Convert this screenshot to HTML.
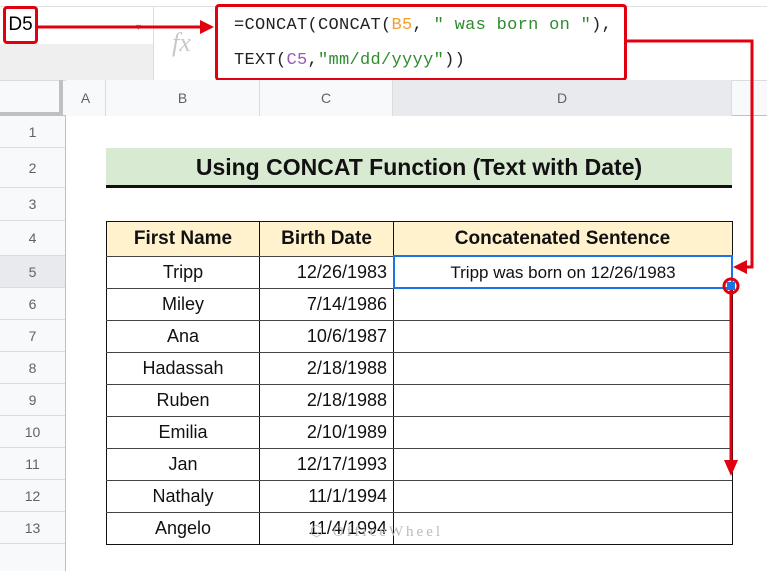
<!DOCTYPE html>
<html><head><style>
body{margin:0;width:767px;height:571px;position:relative;overflow:hidden;background:#fff;font-family:"Liberation Sans",Arial,sans-serif}
.a{position:absolute}
.rh{position:absolute;left:0;width:65px;background:#f8f9fa;border-bottom:1px solid #dadce0;color:#5f6368;font-size:14px;text-align:center;box-sizing:border-box}
.ch{position:absolute;top:80px;height:36px;line-height:36px;color:#5f6368;font-size:14px;text-align:center;border-right:1px solid #dadce0;box-sizing:border-box;background:#f8f9fa}
.c{position:absolute;box-sizing:border-box;font-size:18px;color:#111}
.mono{font-family:"Liberation Mono",monospace;font-size:17px;letter-spacing:0.3px}
</style></head><body>
<div class="a" style="left:0;top:6px;width:767px;height:1px;background:#e0e0e0"></div>
<div class="a" style="left:0;top:44px;width:153px;height:36px;background:#efefef"></div>
<div class="a" style="left:153px;top:7px;width:1px;height:73px;background:#dadce0"></div>
<div class="a" style="left:134px;top:22px;color:#999;font-size:9px">▼</div>
<div class="a" style="left:172px;top:28px;font-family:'Liberation Serif',serif;font-style:italic;font-size:26px;color:#c8c8c8">fx</div>
<div class="a" style="left:3px;top:6px;width:35px;height:38px;border:3px solid #e0000f;border-radius:4px;box-sizing:border-box;font-size:19px;line-height:32px;text-align:center;color:#000">D5</div>
<div class="a" style="left:215px;top:4px;width:412px;height:77px;border:3px solid #e0000f;border-radius:4px;box-sizing:border-box;background:#fff"></div>
<div class="a mono" style="left:234px;top:16px;color:#222">=CONCAT(CONCAT(<span style="color:#f0a030">B5</span>, <span style="color:#2e8b2e">" was born on "</span>),</div>
<div class="a mono" style="left:234px;top:51px;color:#222">TEXT(<span style="color:#9b59b6">C5</span>,<span style="color:#2e8b2e">"mm/dd/yyyy"</span>))</div>
<div class="a" style="left:0;top:80px;width:767px;height:36px;background:#f8f9fa;border-top:1px solid #dadce0;border-bottom:1px solid #c0c0c0;box-sizing:border-box"></div>
<div class="a" style="left:0;top:80px;width:63px;height:36px;border-right:4px solid #c0c0c0;border-bottom:4px solid #c0c0c0;box-sizing:border-box"></div>
<div class="ch" style="left:66px;width:40px">A</div>
<div class="ch" style="left:106px;width:154px">B</div>
<div class="ch" style="left:260px;width:133px">C</div>
<div class="ch" style="left:393px;width:339px;background:#e8eaed">D</div>
<div class="a" style="left:65px;top:116px;width:1px;height:455px;background:#c0c0c0"></div>
<div class="rh" style="top:116px;height:32px;line-height:32px">1</div>
<div class="rh" style="top:148px;height:40px;line-height:40px">2</div>
<div class="rh" style="top:188px;height:33px;line-height:33px">3</div>
<div class="rh" style="top:221px;height:35px;line-height:35px">4</div>
<div class="rh" style="top:256px;height:32px;line-height:32px;background:#e8eaed">5</div>
<div class="rh" style="top:288px;height:32px;line-height:32px">6</div>
<div class="rh" style="top:320px;height:32px;line-height:32px">7</div>
<div class="rh" style="top:352px;height:32px;line-height:32px">8</div>
<div class="rh" style="top:384px;height:32px;line-height:32px">9</div>
<div class="rh" style="top:416px;height:32px;line-height:32px">10</div>
<div class="rh" style="top:448px;height:32px;line-height:32px">11</div>
<div class="rh" style="top:480px;height:32px;line-height:32px">12</div>
<div class="rh" style="top:512px;height:32px;line-height:32px">13</div>
<div class="rh" style="top:544px;height:27px;border:none"></div>
<div class="c" style="left:106px;top:148px;width:626px;height:40px;background:#d9ead3;border-bottom:3px solid #111;text-align:center;font-weight:bold;font-size:23px;line-height:38px">Using CONCAT Function (Text with Date)</div>
<div class="a" style="left:106px;top:221px;width:626px;height:35px;background:#fff2cc"></div>
<div class="a" style="left:106px;top:221px;width:627px;height:324px;border:1px solid #111;box-sizing:border-box"></div>
<div class="a" style="left:259px;top:221px;width:1px;height:323px;background:#111"></div>
<div class="a" style="left:393px;top:221px;width:1px;height:323px;background:#111"></div>
<div class="c" style="left:106px;top:221px;width:154px;height:35px;line-height:35px;text-align:center;font-weight:bold;font-size:19px">First Name</div>
<div class="c" style="left:260px;top:221px;width:133px;height:35px;line-height:35px;text-align:center;font-weight:bold;font-size:19px">Birth Date</div>
<div class="c" style="left:393px;top:221px;width:339px;height:35px;line-height:35px;text-align:center;font-weight:bold;font-size:19px">Concatenated Sentence</div>
<div class="a" style="left:106px;top:256px;width:626px;height:1px;background:#444"></div>
<div class="a" style="left:106px;top:288px;width:626px;height:1px;background:#444"></div>
<div class="a" style="left:106px;top:320px;width:626px;height:1px;background:#444"></div>
<div class="a" style="left:106px;top:352px;width:626px;height:1px;background:#444"></div>
<div class="a" style="left:106px;top:384px;width:626px;height:1px;background:#444"></div>
<div class="a" style="left:106px;top:416px;width:626px;height:1px;background:#444"></div>
<div class="a" style="left:106px;top:448px;width:626px;height:1px;background:#444"></div>
<div class="a" style="left:106px;top:480px;width:626px;height:1px;background:#444"></div>
<div class="a" style="left:106px;top:512px;width:626px;height:1px;background:#444"></div>
<div style="position:absolute;left:106px;top:256px;width:154px;font-size:18px;text-align:center;line-height:32px;color:#111">Tripp<br>Miley<br>Ana<br>Hadassah<br>Ruben<br>Emilia<br>Jan<br>Nathaly<br>Angelo</div>
<div style="position:absolute;left:260px;top:256px;width:127px;font-size:18px;text-align:right;line-height:32px;color:#111">12/26/1983<br>7/14/1986<br>10/6/1987<br>2/18/1988<br>2/18/1988<br>2/10/1989<br>12/17/1993<br>11/1/1994<br>11/4/1994</div>
<div class="a" style="left:393px;top:255px;width:340px;height:34px;border:2px solid #1a73e8;box-sizing:border-box;font-size:17px;text-align:center;line-height:31px;color:#111">Tripp was born on 12/26/1983</div>
<div class="a" style="left:310px;top:522px;font-family:'Liberation Serif',serif;font-size:15px;letter-spacing:3px;color:#bbb">⬡ OfficeWheel</div>
<svg class="a" style="left:0;top:0" width="767" height="571">
<g fill="none" stroke="#e0000f" stroke-width="3">
<line x1="38" y1="27" x2="202" y2="27"/>
<polyline points="627,41 752,41 752,267 745,267"/>
<line x1="731" y1="290" x2="731" y2="462"/>
<circle cx="731" cy="286" r="7"/>
</g>
<polygon points="214,27 200,20 200,34" fill="#e0000f"/>
<polygon points="733,267 747,260 747,274" fill="#e0000f"/>
<polygon points="731,476 724,460 738,460" fill="#e0000f"/>
<rect x="727" y="282" width="8" height="8" fill="#1a73e8"/>
</svg>
</body></html>
